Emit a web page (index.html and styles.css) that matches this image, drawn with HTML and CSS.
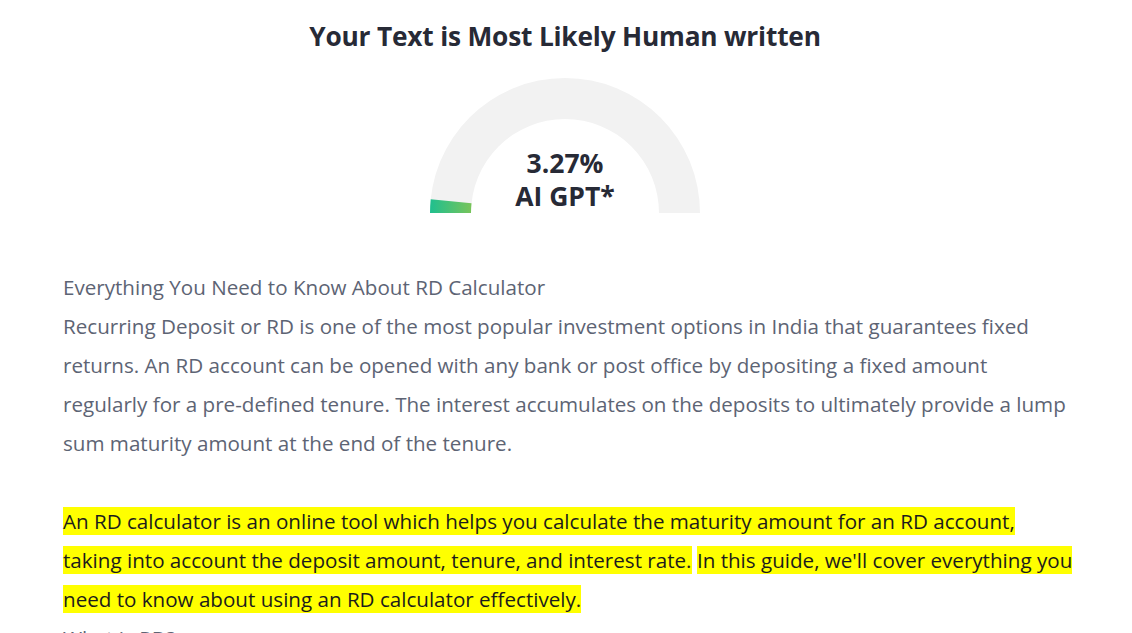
FILE: index.html
```html
<!DOCTYPE html>
<html lang="en">
<head>
<meta charset="utf-8">
<title>AI Detector Result</title>
<link rel="stylesheet" href="styles.css">
</head>
<body>
<div class="page">
  <section class="result">
    <h2 class="result-title">Your Text is Most Likely Human written</h2>
    <div class="gauge">
      <svg class="gauge-svg" width="270" height="135" viewBox="0 0 270 135">
        <defs>
          <linearGradient id="g" x1="0" y1="0" x2="1" y2="0">
            <stop offset="0" stop-color="#1fbf8f"/>
            <stop offset="1" stop-color="#78c45a"/>
          </linearGradient>
        </defs>
        <path d="M0 135 A135 135 0 0 1 270 135 L229 135 A94 94 0 0 0 41 135 Z" fill="#f2f2f2"/>
        <path d="M0 135 A135 135 0 0 1 0.72 121.13 L41.5 125.35 A94 94 0 0 0 41 135 Z" fill="url(#g)"/>
      </svg>
      <div class="gauge-label">
        <span class="gauge-value">3.27%</span>
        <span class="gauge-unit">AI GPT*</span>
      </div>
    </div>
  </section>
  <article class="text">
    <p>Everything You Need to Know About RD Calculator<br>Recurring Deposit or RD is one of the most popular investment options in India that guarantees fixed returns. An RD account can be opened with any bank or post office by depositing a fixed amount regularly for a pre-defined tenure. The interest accumulates on the deposits to ultimately provide a lump sum maturity amount at the end of the tenure.</p>
    <p><span class="hl">An RD calculator is an online tool which helps you calculate the maturity amount for an RD account, taking into account the deposit amount, tenure, and interest rate.</span> <span class="hl">In this guide, we'll cover everything you need to know about using an RD calculator effectively.</span><br>What is RD?</p>
  </article>
</div>
</body>
</html>
```

FILE: styles.css
```css
* { box-sizing: border-box; }
html, body { margin: 0; padding: 0; background: #ffffff; }
body {
  font-family: "Open Sans", "Noto Sans", sans-serif;
  color: #5d6474;
}
.page {
  width: 1012px;
  margin-left: 63px;
}
.result {
  display: flex;
  flex-direction: column;
  align-items: center;
  padding-top: 18px;
  margin-right: 8px;
}
.result-title {
  margin: 0;
  font-size: 26.3px;
  line-height: 36px;
  font-weight: 700;
  color: #272a36;
  letter-spacing: -0.2px;
}
.gauge {
  position: relative;
  width: 270px;
  height: 135px;
  margin-top: 24px;
}
.gauge-svg { display: block; }
.gauge-label {
  position: absolute;
  left: 0;
  right: 0;
  bottom: 0;
  display: flex;
  flex-direction: column;
  align-items: center;
  font-weight: 700;
  font-size: 26.5px;
  line-height: 33px;
  color: #272a36;
}
.text {
  margin-top: 55px;
  font-size: 20.6px;
  line-height: 39px;
}
.text p { margin: 0 0 39px; }
.hl {
  background: #ffff00;
  color: #1c1c1c;
}
```
